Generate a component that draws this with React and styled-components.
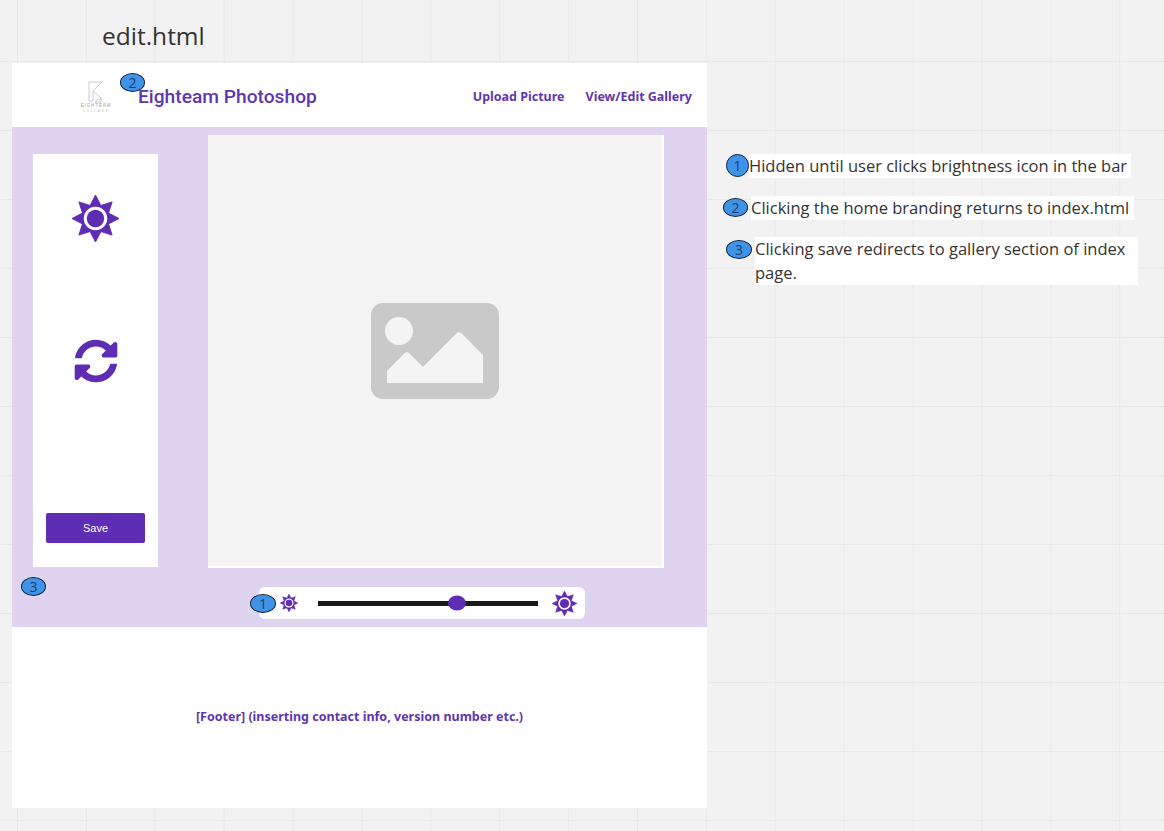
import styled, { createGlobalStyle } from "styled-components";
import { FaImage, FaSyncAlt } from "react-icons/fa";

const PURPLE = "#5e2db3";

const GlobalStyle = createGlobalStyle`
  html, body {
    margin: 0;
    padding: 0;
    height: 100%;
    overflow: hidden;
  }
  body {
    font-family: "Open Sans", sans-serif;
    background-color: #f2f2f2;
    background-image:
      linear-gradient(to right, #e9e9e9 1px, transparent 1px),
      linear-gradient(to bottom, #e9e9e9 1px, transparent 1px);
    background-size: 68.9px 69px;
    background-position: 17px -8px;
  }
`;

const Board = styled.div`
  display: flex;
  width: 1164px;
  height: 831px;
  overflow: hidden;
`;

const LeftColumn = styled.div`
  width: 695px;
  margin-left: 12px;
  flex-shrink: 0;
`;

const Title = styled.h1`
  margin: 0;
  height: 63px;
  padding: 18px 0 0 90px;
  box-sizing: border-box;
  font-size: 24.5px;
  line-height: 35px;
  font-weight: 400;
  color: #333;
`;

const Frame = styled.div`
  position: relative;
  background: #fff;
`;

const Header = styled.header`
  display: flex;
  align-items: center;
  height: 64px;
  padding: 2px 15px 0 68px;
  box-sizing: border-box;
`;

const Logo = styled.div`
  display: flex;
  flex-direction: column;
  align-items: center;
  width: 32px;
  margin-top: 1px;
  color: #a3a3aa;
`;

const LogoName = styled.span`
  font-family: "Liberation Sans", sans-serif;
  font-size: 4.5px;
  line-height: 6px;
  letter-spacing: 0.9px;
  white-space: nowrap;
`;

const LogoSub = styled(LogoName)`
  font-size: 3.5px;
  line-height: 4px;
  letter-spacing: 1.4px;
  color: #c2c2c8;
`;

const Brand = styled.a`
  margin-left: 26px;
  font-family: Roboto, sans-serif;
  font-size: 19.2px;
  font-weight: 500;
  color: #5f35b0;
  white-space: nowrap;
`;

const Nav = styled.nav`
  display: flex;
  gap: 21px;
  margin-left: auto;
`;

const NavLink = styled.a`
  font-family: "Noto Sans", sans-serif;
  font-size: 12.5px;
  font-weight: 700;
  color: #5f35b0;
  white-space: nowrap;
`;

const Main = styled.main`
  display: flex;
  flex-direction: column;
  height: 500px;
  padding: 8px 0 0 21px;
  box-sizing: border-box;
  background: #dfd4f0;
`;

const Workspace = styled.div`
  display: flex;
  align-items: flex-start;
  gap: 50px;
`;

const Sidebar = styled.aside`
  display: flex;
  flex-direction: column;
  align-items: center;
  width: 125px;
  height: 413px;
  margin-top: 19px;
  padding: 41px 13px 24px;
  box-sizing: border-box;
  background: #fff;
`;

const RefreshIcon = styled(FaSyncAlt)`
  display: block;
  margin-top: 97px;
  color: ${PURPLE};
`;

const SaveButton = styled.button`
  width: 100%;
  height: 30px;
  margin-top: auto;
  border: 0;
  border-radius: 2px;
  background: ${PURPLE};
  color: #fff;
  font-family: "Liberation Sans", sans-serif;
  font-size: 11px;
`;

const Canvas = styled.div`
  display: flex;
  align-items: center;
  justify-content: center;
  width: 456px;
  height: 433px;
  box-sizing: border-box;
  background: #f4f4f4;
  border-right: 2px solid #fff;
  border-bottom: 2px solid #fff;
  color: #c9c9c9;
`;

const SliderBar = styled.div`
  display: flex;
  align-items: center;
  width: 326px;
  height: 32px;
  margin: 19px 0 0 226px;
  padding: 0 8px 0 21px;
  box-sizing: border-box;
  border-radius: 6px;
  background: #fff;
`;

const Track = styled.div`
  position: relative;
  flex: 1;
  height: 5px;
  margin: 0 14px 0 20px;
  background: #1a1a1a;
`;

const Thumb = styled.span`
  position: absolute;
  top: 50%;
  left: 59%;
  width: 18px;
  height: 15px;
  border-radius: 50%;
  background: ${PURPLE};
  transform: translateY(-50%);
`;

const Footer = styled.footer`
  display: flex;
  align-items: center;
  justify-content: center;
  height: 181px;
  padding-bottom: 2px;
  box-sizing: border-box;
  font-family: "Noto Sans", sans-serif;
  font-size: 12.5px;
  font-weight: 700;
  color: #5f35b0;
`;

const Badge = styled.span`
  display: flex;
  align-items: center;
  justify-content: center;
  flex-shrink: 0;
  width: ${(p) => p.$w || 25}px;
  height: ${(p) => p.$h || 19}px;
  margin-top: ${(p) => p.$offset || 0}px;
  box-sizing: border-box;
  border: 1.5px solid #13233a;
  border-radius: 50%;
  background: #3f94ea;
  color: #1d3d66;
  font-family: "Open Sans", sans-serif;
  font-size: 14px;
  line-height: 1;
`;

const PinnedBadge = styled(Badge)`
  position: absolute;
  top: ${(p) => p.$top}px;
  left: ${(p) => p.$left}px;
`;

const Notes = styled.section`
  display: flex;
  flex-direction: column;
  padding: 154px 0 0 16px;
`;

const Note = styled.div`
  display: flex;
  align-items: flex-start;
  margin-top: ${(p) => p.$top || 0}px;
  margin-left: ${(p) => p.$left || 0}px;
`;

const NoteText = styled.p`
  width: ${(p) => p.$width}px;
  margin: 0 0 0 ${(p) => p.$gap || 0}px;
  box-sizing: border-box;
  background: #fff;
  color: #333;
  font-size: 16.5px;
  line-height: 24px;
`;

const Sun = ({ size }) => {
  // eight pointed star with a cut-out ring
  const points = [];
  for (let i = 0; i < 16; i++) {
    const r = i % 2 === 0 ? 50 : 30;
    const a = (i * Math.PI) / 8 - Math.PI / 2;
    points.push(`${50 + r * Math.cos(a)},${50 + r * Math.sin(a)}`);
  }
  return (
    <svg width={size} height={size} viewBox="0 0 100 100" style={{ display: "block", flexShrink: 0 }}>
      <polygon points={points.join(" ")} fill={PURPLE} stroke={PURPLE} strokeWidth="2" strokeLinejoin="round" />
      <circle cx="50" cy="50" r="25" fill="#fff" />
      <circle cx="50" cy="50" r="18.5" fill={PURPLE} />
    </svg>
  );
};

const LogoMark = () => (
  <svg width="16" height="22" viewBox="0 0 16 22" fill="none" stroke="#b4b4bb" strokeWidth="0.7">
    <path d="M1 1h13L5 10v10M1 1v19h4M5 10l8 7v4H7l3-3h4" />
  </svg>
);

const App = () => {
  return (
    <>
      <GlobalStyle />
      <Board>
        <LeftColumn>
          <Title>edit.html</Title>
          <Frame>
            <Header>
              <Logo>
                <LogoMark />
                <LogoName>EIGHTEAM</LogoName>
                <LogoSub>COLLAGE</LogoSub>
              </Logo>
              <Brand>Eighteam Photoshop</Brand>
              <Nav>
                <NavLink>Upload Picture</NavLink>
                <NavLink>View/Edit Gallery</NavLink>
              </Nav>
            </Header>
            <Main>
              <Workspace>
                <Sidebar>
                  <Sun size={47} />
                  <RefreshIcon size={44} />
                  <SaveButton>Save</SaveButton>
                </Sidebar>
                <Canvas>
                  <FaImage size={128} />
                </Canvas>
              </Workspace>
              <SliderBar>
                <Sun size={18} />
                <Track>
                  <Thumb />
                </Track>
                <Sun size={25} />
              </SliderBar>
            </Main>
            <Footer>[Footer] (inserting contact info, version number etc.)</Footer>
            <PinnedBadge $top={10} $left={108}>2</PinnedBadge>
            <PinnedBadge $top={514} $left={9}>3</PinnedBadge>
            <PinnedBadge $top={531} $left={238} $w={26}>1</PinnedBadge>
          </Frame>
        </LeftColumn>
        <Notes>
          <Note $left={3}>
            <Badge $w={23} $h={23}>1</Badge>
            <NoteText $width={382}>Hidden until user clicks brightness icon in the bar</NoteText>
          </Note>
          <Note $top={18}>
            <Badge $h={19} $offset={2}>2</Badge>
            <NoteText $width={383} $gap={3}>Clicking the home branding returns to index.html</NoteText>
          </Note>
          <Note $top={17} $left={3}>
            <Badge $w={26} $offset={3}>3</Badge>
            <NoteText $width={383} $gap={3}>Clicking save redirects to gallery section of index page.</NoteText>
          </Note>
        </Notes>
      </Board>
    </>
  );
};

export default App;
